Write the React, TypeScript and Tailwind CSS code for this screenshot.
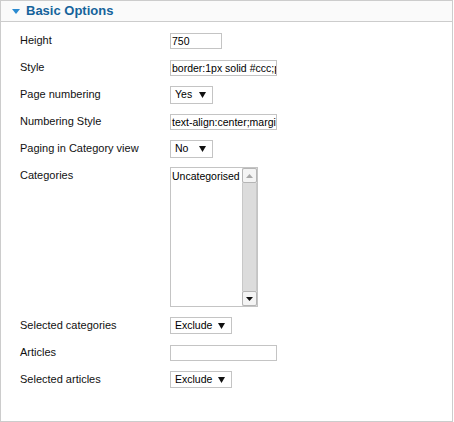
const fieldText = "font-['Liberation_Sans',Arial,sans-serif] text-[10.5px] text-black";

function TextBox({ value = "", width }: { value?: string; width: string }) {
  return (
    <div className={`${width} h-[16px] overflow-hidden whitespace-nowrap border border-[#c4c4c4] bg-white pl-[1px] leading-[14px] ${fieldText}`}>
      {value}
    </div>
  );
}

function Dropdown({ value, width, height = "h-[18px]" }: { value: string; width: string; height?: string }) {
  return (
    <div className={`${width} ${height} flex items-center justify-between border border-[#c4c4c4] bg-white pl-[4px] pr-[6px] ${fieldText}`}>
      <span>{value}</span>
      <svg width="7" height="6" viewBox="0 0 7 6">
        <path d="M0 0h7L3.5 6z" fill="#111" />
      </svg>
    </div>
  );
}

function ListBox() {
  return (
    <div className="flex h-[140px] w-[88px] border border-[#c4c4c4] bg-white">
      <div className={`flex-1 overflow-hidden whitespace-nowrap pl-[1px] pt-[2px] leading-[12px] ${fieldText}`}>Uncategorised</div>
      <div className="flex w-[15px] shrink-0 flex-col bg-[#dcdcdc]">
        <div className="flex h-[15px] items-center justify-center rounded-[2px] border border-[#b5b5b5] bg-[#f4f4f4]">
          <svg width="7" height="4" viewBox="0 0 7 4">
            <path d="M0 4h7L3.5 0z" fill="#a8a8a8" />
          </svg>
        </div>
        <div className="flex-1 border-x border-[#c8c8c8]" />
        <div className="flex h-[15px] items-center justify-center rounded-[2px] border border-[#b5b5b5] bg-[#f4f4f4]">
          <svg width="7" height="4" viewBox="0 0 7 4">
            <path d="M0 0h7L3.5 4z" fill="#111" />
          </svg>
        </div>
      </div>
    </div>
  );
}

function Row({ label, children }: { label: string; children: React.ReactNode }) {
  return (
    <div className="flex h-[27px] items-center">
      <div className="w-[150px] shrink-0">{label}</div>
      {children}
    </div>
  );
}

export default function App() {
  return (
    <div className="h-[422px] w-[454px] bg-white">
      <div className="h-[422px] w-[453px] border border-[#cccccc] font-['Liberation_Sans',Arial,sans-serif] text-[11px] text-[#111]">
        <div className="flex h-[21px] items-center gap-[6px] border-b border-[#cccccc] bg-[#fafafa] pl-[11px]">
          <svg width="8" height="5" viewBox="0 0 8 5">
            <path d="M0 0h8L4 5z" fill="#2a8ad0" />
          </svg>
          <span className="text-[13px] font-bold text-[#15639b]">Basic Options</span>
        </div>

        <div className="pl-[19px] pt-[5px]">
          <Row label="Height">
            <TextBox value="750" width="w-[52px]" />
          </Row>
          <Row label="Style">
            <TextBox value="border:1px solid #ccc;padding:5px" width="w-[107px]" />
          </Row>
          <Row label="Page numbering">
            <Dropdown value="Yes" width="w-[43px]" />
          </Row>
          <Row label="Numbering Style">
            <TextBox value="text-align:center;margin:10px" width="w-[107px]" />
          </Row>
          <Row label="Paging in Category view">
            <Dropdown value="No" width="w-[43px]" />
          </Row>
          <div className="flex items-start py-[5px]">
            <div className="w-[150px] shrink-0 pt-[2px] leading-[13px]">Categories</div>
            <ListBox />
          </div>
          <Row label="Selected categories">
            <Dropdown value="Exclude" width="w-[62px]" height="h-[17px]" />
          </Row>
          <Row label="Articles">
            <TextBox width="w-[107px]" />
          </Row>
          <Row label="Selected articles">
            <Dropdown value="Exclude" width="w-[62px]" height="h-[17px]" />
          </Row>
        </div>
      </div>
    </div>
  );
}
